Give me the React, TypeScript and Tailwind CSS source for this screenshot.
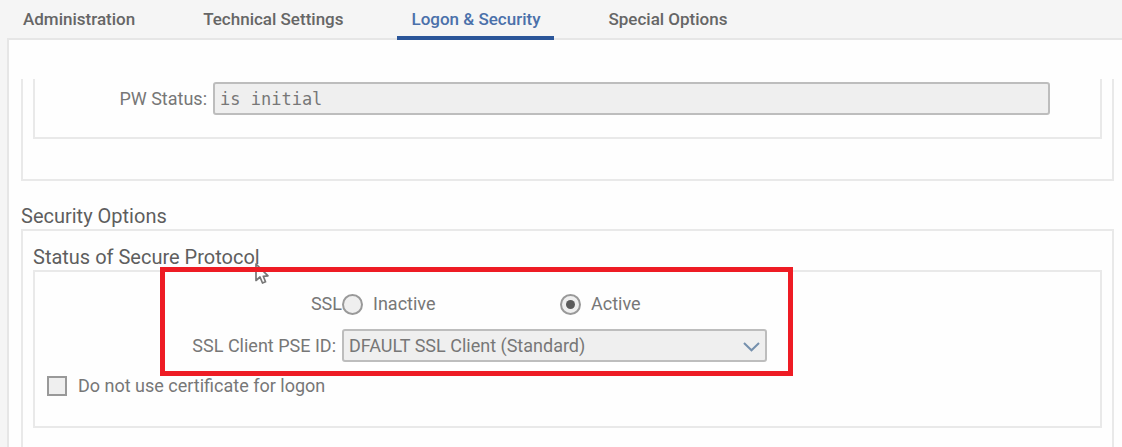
import { useState } from "react";

const tabs = ["Administration", "Technical Settings", "Logon & Security", "Special Options"];

function TabBar({ active, onSelect }: { active: string; onSelect: (tab: string) => void }) {
  return (
    <div role="tablist" className="flex h-[38px] gap-10 pl-[9px] text-[17px] font-medium">
      {tabs.map((tab) => (
        <button
          key={tab}
          type="button"
          role="tab"
          aria-selected={tab === active}
          onClick={() => onSelect(tab)}
          className={
            tab === active
              ? "relative z-10 -mb-[2px] border-b-4 border-[#2a5599] px-[14px] pt-[2px] whitespace-nowrap text-[#4a70aa]"
              : "relative -mb-[2px] border-b-4 border-transparent px-[14px] pt-[2px] whitespace-nowrap text-[#666]"
          }
        >
          {tab}
        </button>
      ))}
    </div>
  );
}

function Radio({ id, label, checked, onChange }: { id: string; label: string; checked: boolean; onChange: () => void }) {
  return (
    <div className="flex items-center gap-[10px]">
      <span className="grid size-[21px] shrink-0 place-items-center">
        <input
          id={id}
          type="radio"
          name="ssl"
          checked={checked}
          onChange={onChange}
          className="peer col-start-1 row-start-1 size-[21px] appearance-none rounded-full border-2 border-[#999] bg-[#efefef]"
        />
        <span className="pointer-events-none col-start-1 row-start-1 hidden size-[9px] rounded-full bg-[#5c5c5c] peer-checked:block" />
      </span>
      <label htmlFor={id}>{label}</label>
    </div>
  );
}

function Pointer() {
  return (
    <svg className="pointer-events-none absolute -top-[9px] left-[220px] h-[22px] w-[15px]" viewBox="0 0 15 22" aria-hidden="true">
      <path d="M1 1 V17.500 L5 14 L7.500 20 L10.500 18.800 L8.300 13.300 L13 12.800 Z" fill="#fff" stroke="#777" strokeWidth="1.700" strokeLinejoin="round" />
    </svg>
  );
}

export default function App() {
  const [active, setActive] = useState("Logon & Security");
  const [ssl, setSsl] = useState("active");

  return (
    <div className="flex min-h-screen flex-col bg-[#f5f5f5] font-['Roboto','Liberation_Sans',sans-serif] text-[18px] leading-6 text-[#777]">
      <TabBar active={active} onSelect={setActive} />
      <main className="ml-[7px] flex flex-1 flex-col border-t-2 border-l-2 border-[#e6e6e6] bg-[#fefefe] pt-[39px] pr-2 pl-3">
        <section className="border-x-2 border-b-2 border-[#e9e9e9] px-[10px] pb-10">
          <div className="flex items-center border-x-2 border-b-2 border-[#e9e9e9] pt-[3px] pr-[50px] pb-[22px]">
            <label htmlFor="pw-status" className="w-[178px] shrink-0 pr-[6px] text-right">
              PW Status:
            </label>
            <input
              id="pw-status"
              readOnly
              value="is initial"
              className="h-[33px] min-w-0 flex-1 rounded-[3px] border-2 border-[#bdbdbd] bg-[#efefef] px-[5px] font-['DejaVu_Sans_Mono',monospace] text-[17px] outline-none"
            />
          </div>
        </section>

        <h2 className="mt-[23px] text-[20px] text-[#5e5e5e]">Security Options</h2>
        <section className="mt-[1px] flex-1 border-x-2 border-t-2 border-[#e9e9e9] px-[10px] pt-[14px] pb-[19px]">
          <h3 className="text-[20px] text-[#5e5e5e]">Status of Secure Protocol</h3>
          <div className="relative mt-[1px] border-2 border-[#e9e9e9] pt-[20px] pb-[28px]">
            <Pointer />
            <div className="pointer-events-none absolute -top-[5px] left-[125px] h-[109px] w-[633px] border-[5px] border-[#ee1c24]" />
            <div role="radiogroup" aria-labelledby="ssl-label" className="flex items-center">
              <span id="ssl-label" className="w-[307px] shrink-0 text-right">
                SSL
              </span>
              <div className="grid grid-cols-[218px_auto]">
                <Radio id="ssl-inactive" label="Inactive" checked={ssl === "inactive"} onChange={() => setSsl("inactive")} />
                <Radio id="ssl-active" label="Active" checked={ssl === "active"} onChange={() => setSsl("active")} />
              </div>
            </div>
            <div className="mt-[13px] flex items-center">
              <label htmlFor="pse" className="w-[307px] shrink-0 pr-[6px] text-right">
                SSL Client PSE ID:
              </label>
              <div className="grid w-[425px] items-center">
                <select
                  id="pse"
                  className="col-start-1 row-start-1 h-[33px] w-full appearance-none rounded-[3px] border-2 border-[#bdbdbd] bg-[#efefef] px-[5px]"
                >
                  <option>DFAULT SSL Client (Standard)</option>
                </select>
                <svg className="pointer-events-none col-start-1 row-start-1 mt-[3px] mr-[7px] h-[10px] w-[17px] justify-self-end" viewBox="0 0 17 10" fill="none" aria-hidden="true">
                  <path d="M1 1 L8.500 8.300 L16 1" stroke="#7590ad" strokeWidth="2" />
                </svg>
              </div>
            </div>
            <div className="mt-[12px] flex items-center gap-[11px] pl-3">
              <input
                id="no-cert"
                type="checkbox"
                className="size-5 appearance-none border-2 border-[#999] bg-[#efefef] checked:bg-[#999]"
              />
              <label htmlFor="no-cert">Do not use certificate for logon</label>
            </div>
          </div>
        </section>
      </main>
    </div>
  );
}
